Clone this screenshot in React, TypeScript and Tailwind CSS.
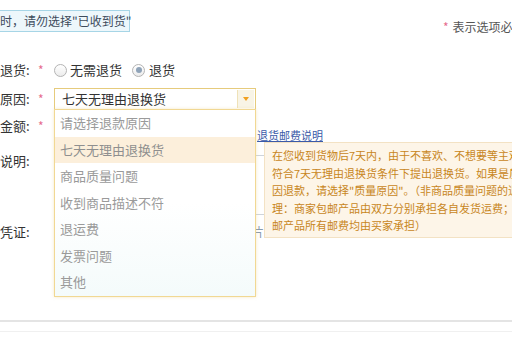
import React from "react";

const font = { fontFamily: '"Noto Sans CJK SC", "Noto Sans", "Liberation Sans", sans-serif' };

function Radio({ checked }: { checked?: boolean }) {
  return (
    <span className="flex h-[13px] w-[13px] items-center justify-center rounded-full border border-[#b4b4b4] bg-gradient-to-b from-white to-[#ececec]">
      {checked && <span className="h-[6px] w-[6px] rounded-full bg-[#8fa3b8]" />}
    </span>
  );
}

function Label({ text, star }: { text: string; star?: boolean }) {
  return (
    <>
      <span className="w-[38px] shrink-0 whitespace-nowrap text-[13px] text-[#333]">{text}</span>
      <span className="w-[16px] shrink-0 text-[12px] text-[#e66b8f]">{star ? "*" : ""}</span>
    </>
  );
}

const items = ["请选择退款原因", "七天无理由退换货", "商品质量问题", "收到商品描述不符", "退运费", "发票问题", "其他"];

export default function App() {
  return (
    <div className="relative h-[340px] w-[512px] overflow-hidden bg-white" style={font}>
      {/* notice row */}
      <div className="flex items-start pt-[10px]">
        <div className="h-[22px] w-[130px] shrink-0 whitespace-nowrap border border-l-0 border-[#a6d5e6] bg-[#edf7fb] text-[12px] leading-[20px] text-[#3d4b5c]">
          时，请勿选择"已收到货"
        </div>
        <div className="ml-[313px] mt-[10px] shrink-0 whitespace-nowrap text-[12px] leading-[14px] text-[#555]">
          <span className="text-[#e66b8f]">*</span>
          <span className="ml-[4px]">表示选项必填</span>
        </div>
      </div>

      {/* radio row */}
      <div className="mt-[24px] flex h-[24px] items-center">
        <Label text="退货:" star />
        <Radio />
        <span className="ml-[3px] text-[13px] text-[#333]">无需退货</span>
        <span className="ml-[10px]">
          <Radio checked />
        </span>
        <span className="ml-[4px] text-[13px] text-[#333]">退货</span>
      </div>

      {/* select row */}
      <div className="mt-[6px] flex h-[22px] items-center">
        <Label text="原因:" star />
        <div className="flex h-[22px] w-[202px] items-center border border-[#e6cb7c] bg-white">
          <span className="flex-1 pl-[7px] text-[13px] leading-[20px] text-[#333]">七天无理由退换货</span>
          <span className="mr-[1px] flex h-[18px] w-[17px] items-center justify-center border-l border-[#efe2b8] bg-[#f8f4e6]">
            <span className="h-0 w-0 border-l-[3px] border-r-[3px] border-t-[4px] border-l-transparent border-r-transparent border-t-[#f0a020]" />
          </span>
        </div>
      </div>

      {/* amount row */}
      <div className="mt-[4px] flex h-[24px] items-start">
        <span className="flex h-[24px] items-center">
          <Label text="金额:" star />
        </span>
        <span className="h-[24px] w-[203px] shrink-0" />
        <span className="mt-[14px] whitespace-nowrap text-[11px] leading-[14px] text-[#3b5aa8] underline">退货邮费说明</span>
      </div>

      {/* description row */}
      <div className="mt-[11px] flex items-start">
        <span className="flex h-[24px] items-center">
          <Label text="说明:" />
        </span>
        <div className="mt-[6px] h-[60px] w-[400px] shrink-0 border border-[#cfd4da] bg-white" />
      </div>

      {/* voucher row */}
      <div className="mt-[5px] flex h-[24px] items-center">
        <Label text="凭证:" />
        <span className="w-[210px] shrink-0 whitespace-nowrap text-right text-[12px] text-[#8a9aab]">上传图片</span>
      </div>

      {/* bottom lines */}
      <div className="mt-[76px] h-[2px] bg-[#e4e4e4]" />
      <div className="mt-[9px] h-px bg-[#f0f0f0]" />

      {/* dropdown list */}
      <div className="absolute left-[54px] top-[109px] w-[202px] border border-[#f1d893] bg-gradient-to-b from-white via-white to-[#f4fbfb] shadow-[0_0_3px_rgba(240,210,140,0.5)]">
        {items.map((t, i) => (
          <div
            key={t}
            className={`h-[26.5px] whitespace-nowrap pl-[5px] text-[13px] leading-[26.5px] ${
              i === 1 ? "bg-[#fcefdb] text-[#8f8f8f]" : "text-[#9a9a9a]"
            }`}
          >
            {t}
          </div>
        ))}
      </div>

      {/* tooltip */}
      <div className="absolute left-[264px] top-[142px] h-[96px] w-[270px] whitespace-nowrap border border-[#f3e2c4] bg-[#fdf5e8] pl-[7px] pt-[4px] text-[11px] leading-[17.5px] text-[#c8861c]">
        <div>在您收到货物后7天内，由于不喜欢、不想要等主观</div>
        <div>符合7天无理由退换货条件下提出退换货。如果是质量</div>
        <div>因退款，请选择"质量原因"。（非商品质量问题的退</div>
        <div>理：商家包邮产品由双方分别承担各自发货运费；非</div>
        <div>邮产品所有邮费均由买家承担）</div>
      </div>
    </div>
  );
}
